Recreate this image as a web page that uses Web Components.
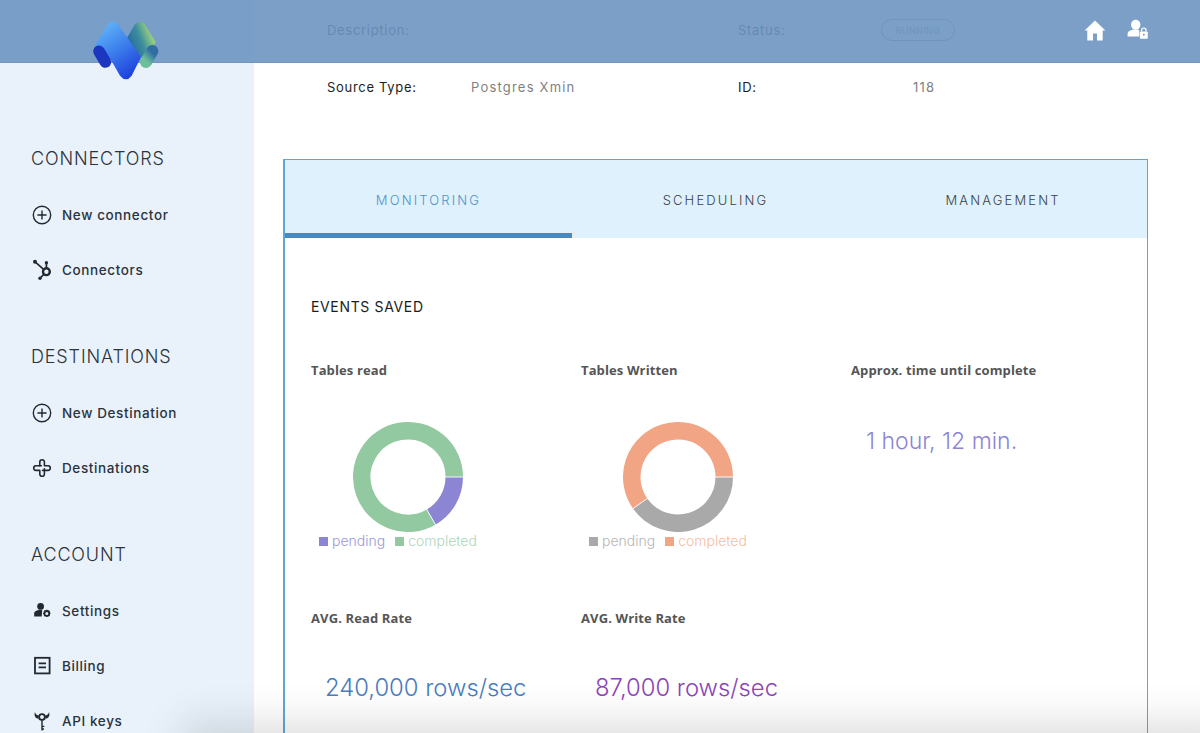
<!DOCTYPE html>
<html><head><meta charset="utf-8">
<style>
html,body{margin:0;padding:0;background:#fff;font-family:"Inter","Liberation Sans",sans-serif}
</style></head><body>
<app-shell>
  <side-bar slot="side">
    <nav-section title="CONNECTORS">
      <nav-item icon="plus">New connector</nav-item>
      <nav-item icon="hub">Connectors</nav-item>
    </nav-section>
    <nav-section title="DESTINATIONS">
      <nav-item icon="plus">New Destination</nav-item>
      <nav-item icon="dest">Destinations</nav-item>
    </nav-section>
    <nav-section title="ACCOUNT">
      <nav-item icon="gear">Settings</nav-item>
      <nav-item icon="bill">Billing</nav-item>
      <nav-item icon="key">API keys</nav-item>
    </nav-section>
  </side-bar>
  <info-grid>
    <info-cell label="Description:"></info-cell><info-cell label="Status:" wide><status-chip>RUNNING</status-chip></info-cell>
    <info-cell label="Source Type:">Postgres Xmin</info-cell><info-cell label="ID:" wide>118</info-cell>
  </info-grid>
  <tab-card>
    <metric-block title="Tables read"><donut-chart pending="60" c1="#8b85d3" c2="#93c9a0"></donut-chart></metric-block>
    <metric-block title="Tables Written"><donut-chart pending="145" c1="#a9a9a9" c2="#f2a584"></donut-chart></metric-block>
    <metric-block title="Approx. time until complete"><big-value color="#8b85d3" top="48" left="15" size="23">1 hour, 12 min.</big-value></metric-block>
    <metric-block title="AVG. Read Rate"><big-value color="#4a7cbe" top="47" left="14" size="23.8">240,000 rows/sec</big-value></metric-block>
    <metric-block title="AVG. Write Rate"><big-value color="#8a45b8" top="47" left="14" size="23.8">87,000 rows/sec</big-value></metric-block>
  </tab-card>
</app-shell>
<script>
function def(name, css, html, init){
  customElements.define(name, class extends HTMLElement{
    constructor(){super();this.attachShadow({mode:'open'});}
    connectedCallback(){
      this.shadowRoot.innerHTML='<style>'+css+'</style>'+(typeof html==='function'?html(this):html);
      if(init)init(this);
    }
  });
}
const ICONS={
 plus:'<circle cx="12" cy="12" r="8.7" fill="none" stroke="currentColor" stroke-width="1.4"/><path d="M12 7.4v9.2M7.4 12h9.2" stroke="currentColor" stroke-width="1.4" fill="none"/>',
 hub:'<circle cx="16.4" cy="13.7" r="3.4" fill="none" stroke="currentColor" stroke-width="2.4"/><path d="M5.4 4.2l8.2 7.2M16.4 9.5V5.2M13.8 16.4L10.2 20" stroke="currentColor" stroke-width="1.7" fill="none"/><circle cx="5" cy="3.8" r="2" fill="currentColor"/><circle cx="16.4" cy="4.8" r="1.7" fill="currentColor"/><circle cx="10" cy="20.3" r="1.7" fill="currentColor"/>',
 dest:'<g fill="none" stroke="currentColor" stroke-width="1.6" stroke-linecap="round" stroke-linejoin="round"><path d="M9.8 9.8V6a2.3 2.3 0 0 1 2.3-2.3A2.3 2.3 0 0 1 14.4 6v3.8H18a2.3 2.3 0 0 1 2.3 2.3 2.3 2.3 0 0 1-2.3 2.3h-5.4"/><path d="M14.4 12.8V18a2.3 2.3 0 0 1-2.3 2.3A2.3 2.3 0 0 1 9.8 18v-3.6H6a2.3 2.3 0 0 1-2.3-2.3A2.3 2.3 0 0 1 6 9.8h5.4"/></g>',
 gear:'<circle cx="10.6" cy="7.4" r="3.4" fill="currentColor"/><path d="M4.2 17.6v-3.2c0-2 2.4-3.3 6-3.3.7 0 1.4 0 2 .2l-.5 6.3z" fill="currentColor"/><circle cx="16.8" cy="14.4" r="2.4" fill="none" stroke="currentColor" stroke-width="1.8"/><path d="M16.8 10.7v1.3M16.8 16.8v1.3M13.1 14.4h1.3M19.2 14.4h1.3M14.2 11.8l.9.9M18.5 16.1l.9.9M19.4 11.8l-.9.9M15.1 16.1l-.9.9" stroke="currentColor" stroke-width="1.3"/>',
 bill:'<rect x="5" y="3.8" width="14.6" height="15.6" fill="none" stroke="currentColor" stroke-width="1.8"/><path d="M8.6 9.4h7.4M8.6 13.4h7.4" stroke="currentColor" stroke-width="1.6"/>',
 key:'<circle cx="12" cy="8" r="2.9" fill="none" stroke="currentColor" stroke-width="1.9"/><path d="M12 11v10.4M12 17.4h2.3M12 20h2" stroke="currentColor" stroke-width="1.4" fill="none"/><path d="M8.6 6.6C6.4 6.2 5.2 4.8 5 3 3.8 6 5 9.4 8.4 9.6zM15.4 6.6c2.2-.4 3.4-1.8 3.6-3.6 1.2 3 0 6.4-3.4 6.6z" fill="currentColor"/>'
};
def('app-shell',`
  :host{display:block;position:relative;width:1200px;height:733px;overflow:hidden;background:#fff}
  .layout{display:grid;grid-template-columns:254px 1fr;height:100%}
  .main{padding:20px 52px 0 30px;min-width:0}
  .bar{position:absolute;left:0;top:0;right:0;background:rgba(109,149,193,.9);border-bottom:1px solid #7095bf;display:flex;align-items:center;justify-content:flex-end;gap:19px;padding-right:51px;box-sizing:border-box;height:63px}
  .logo{position:absolute;left:90px;top:18.3px;width:71.7px;height:65px}
  .shade{position:absolute;left:200px;right:-20px;top:742px;height:10px;border-radius:30px;box-shadow:0 0 38px 20px rgba(60,60,60,.17)}
`,`
  <div class="layout"><slot name="side"></slot><div class="main"><slot></slot></div></div>
  <div class="bar">
    <svg width="22" height="22" viewBox="0 0 22 22"><path d="M11 .6L.6 10.6h2.7V20.6h5.7V13.6h4V20.6h5.7V10.6h2.7z" fill="#fff"/></svg>
    <svg width="24" height="24" viewBox="0 0 24 24"><ellipse cx="10.7" cy="5.8" rx="4.7" ry="5" fill="#fff"/><path d="M2.6 17.6v-2.4c0-3 3.3-4.6 8-4.6 1.4 0 2.7.15 3.6.45v6.55z" fill="#fff"/><rect x="14.8" y="12.4" width="8" height="7.4" rx="1" fill="#fff"/><path d="M16.6 12.4v-1.2a2.2 2.2 0 0 1 4.4 0v1.2" fill="none" stroke="#fff" stroke-width="1.2"/><circle cx="18.8" cy="15.8" r="1" fill="#7a9ec6"/></svg>
  </div>
  <svg class="logo" viewBox="270 55 215 195">
    <defs>
      <linearGradient id="g1" x1="0.15" y1="0" x2="0.7" y2="1"><stop offset="0" stop-color="#66b8f8"/><stop offset=".45" stop-color="#3f86ee"/><stop offset="1" stop-color="#1f3fdc"/></linearGradient>
      <linearGradient id="g2" x1="0" y1="0.75" x2="1" y2="0.25"><stop offset="0" stop-color="#1f5f9e"/><stop offset=".5" stop-color="#3f8f9f"/><stop offset=".9" stop-color="#a9dc74"/></linearGradient>
      <linearGradient id="g3" x1="0.8" y1="0" x2="0.2" y2="1"><stop offset="0" stop-color="#2f6da4"/><stop offset="1" stop-color="#6fc09a"/></linearGradient>
    </defs>
    <path d="M379 118L405 74Q419 58 434 74L467 128L440 172Q425 178 412 160z" fill="url(#g2)"/>
    <path d="M457 154L438 187" stroke="url(#g3)" stroke-width="36" stroke-linecap="round" fill="none"/>
    <path d="M284 138L323 74Q338 60 354 74L423 172L395 228Q378 250 360 228L330 176L300 165z" fill="url(#g1)"/>
    <path d="M297 155L316 187" stroke="#1c36c0" stroke-width="35" stroke-linecap="round" fill="none"/>
  </svg>
  <div class="shade"></div>
`);
def('side-bar',`
  :host{display:block;background:#e9f2fb;padding-top:144px;height:100%;box-sizing:border-box;overflow:hidden}
`,'<slot></slot>');
def('nav-section',`
  :host{display:block;margin-bottom:44.5px}
  h2{margin:0 0 13.5px;padding-left:31px;height:30px;font:300 18px/30px Inter,"Liberation Sans",sans-serif;letter-spacing:.85px;color:#2b333d}
`,h=>`<h2>${h.getAttribute('title')}</h2><slot></slot>`);
def('nav-item',`
  :host{display:flex;align-items:center;height:55px;padding-left:30px;gap:8px;font:500 13.5px Inter,"Liberation Sans",sans-serif;letter-spacing:.62px;color:#2b333d}
  svg{width:24px;height:24px;flex:none;color:#23282e}
`,h=>`<svg viewBox="0 0 24 24">${ICONS[h.getAttribute('icon')]}</svg><span><slot></slot></span>`);
def('info-grid',`
  :host{display:grid;grid-template-columns:411px 1fr;row-gap:37px;padding-left:43px;margin-bottom:62px}
`,'<slot></slot>');
def('info-cell',`
  :host{display:grid;grid-template-columns:144px 1fr;grid-template-rows:20px;align-items:center;height:20px;font:400 13px Inter,"Liberation Sans",sans-serif;letter-spacing:1.2px;color:#808080}
  :host([wide]){grid-template-columns:175px 1fr}
  .l{color:#1d1d1d;letter-spacing:.7px}
  ::slotted(status-chip){margin-left:-32px}
`,h=>`<span class="l">${h.getAttribute('label')}</span><span><slot></slot></span>`);
def('status-chip',`
  :host{display:inline-flex;align-items:center;justify-content:center;width:72px;height:20px;border:1px solid #6f93bc;border-radius:11px;font:400 9px Inter,"Liberation Sans",sans-serif;letter-spacing:.4px;color:#7090b8}
`,'<slot></slot>');
def('tab-card',`
  :host{display:block;border:1px solid #5fa6d2;border-left-width:2px;border-bottom:0;height:640px;box-sizing:border-box;margin-left:-1px}
  .tabs{display:grid;grid-template-columns:287px 287px 288px;height:78px;background:#def1fd}
  .tab{display:flex;align-items:center;justify-content:center;box-sizing:border-box;padding-top:2px;font:300 13px Inter,"Liberation Sans",sans-serif;letter-spacing:2.15px;color:#3c4146}
  .on{color:#4f94c6;border-bottom:5px solid #3f8ccb;padding-top:7px}
  .body{padding:60px 0 0 26px}
  h3{margin:0 0 46px;font:400 14px/18px Inter,"Liberation Sans",sans-serif;letter-spacing:.65px;color:#1c1c1c}
  .grid{display:grid;grid-template-columns:repeat(3,270px);grid-auto-rows:248px}
`,`<div class="tabs"><div class="tab on">MONITORING</div><div class="tab">SCHEDULING</div><div class="tab">MANAGEMENT</div></div>
<div class="body"><h3>EVENTS SAVED</h3><div class="grid"><slot></slot></div></div>`);
def('metric-block',`
  :host{display:block}
  h4{margin:0;font:700 13px/16px "Open Sans","Liberation Sans",sans-serif;letter-spacing:.12px;color:#555}
`,h=>`<h4>${h.getAttribute('title')}</h4><slot></slot>`);
def('big-value',`
  :host{display:block;font:300 23px/30px Inter,"Liberation Sans",sans-serif;white-space:nowrap}
`,h=>{h.style.color=h.getAttribute('color');h.style.fontSize=h.getAttribute('size')+'px';h.style.marginTop=h.getAttribute('top')+'px';h.style.marginLeft=h.getAttribute('left')+'px';return '<slot></slot>';});
def('donut-chart',`
  :host{display:block;margin-top:44px;width:194px}
  svg{display:block;width:110px;height:110px;margin-left:42px}
  .leg{display:flex;align-items:center;margin:0 0 0 8px;font:300 14px/18px Inter,"Liberation Sans",sans-serif;white-space:nowrap}
  i{display:inline-block;width:9px;height:9px;margin-right:4px}
  span{margin-right:10px}
  .a{opacity:.85}.b{opacity:.75}
`,h=>{
  const a=+h.getAttribute('pending')*Math.PI/180,c1=h.getAttribute('c1'),c2=h.getAttribute('c2');
  const R=46.25,x=55+R*Math.cos(a),y=55+R*Math.sin(a),lg=a>Math.PI?1:0,lg2=a>Math.PI?0:1;
  const x1=55+37*Math.cos(a),y1=55+37*Math.sin(a),x2=55+55.5*Math.cos(a),y2=55+55.5*Math.sin(a);
  return `<svg viewBox="0 0 110 110"><path d="M101.25 55A${R} ${R} 0 ${lg} 1 ${x} ${y}" fill="none" stroke="${c1}" stroke-width="17.5"/><path d="M${x} ${y}A${R} ${R} 0 ${lg2} 1 101.25 55" fill="none" stroke="${c2}" stroke-width="17.5"/><path d="M92 55H110.5M${x1} ${y1}L${x2} ${y2}" stroke="#fff" stroke-width=".9"/></svg>
  <div class="leg"><i style="background:${c1}"></i><span class="a" style="color:${c1}">pending</span><i style="background:${c2}"></i><span class="b" style="color:${c2}">completed</span></div>`;
});
</script>
</body></html>
